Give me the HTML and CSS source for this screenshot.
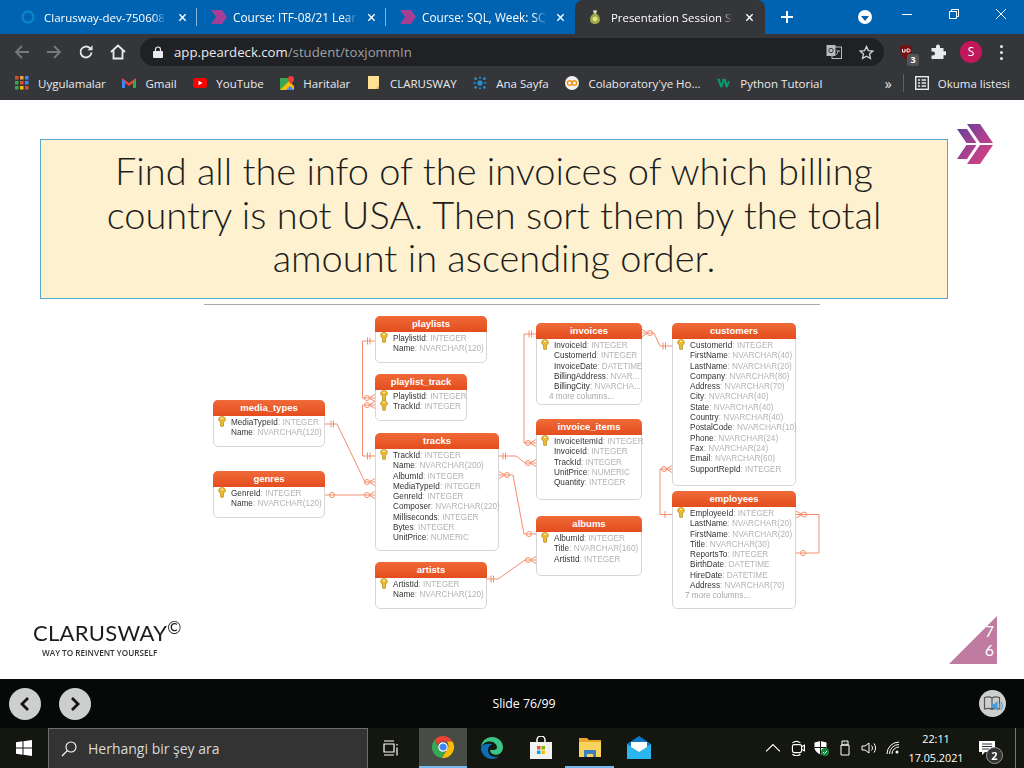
FILE: index.html
```html
<!DOCTYPE html>
<html lang="tr">
<head>
    <meta charset="UTF-8">
    <meta name="viewport" content="width=device-width, initial-scale=1.0">
    <title>Presentation Session Student</title>
    <link rel="stylesheet" href="styles.css">
</head>
<body>

<svg class="defs" width="0" height="0">
    <defs>
        <symbol id="key" viewBox="0 0 8 11">
            <path d="M4 .5C2 .5.6 1.700.6 3.400c0 1.200.8 2.200 1.900 2.700V10l1.500.8 1.500-.8V6.100c1.100-.5 1.900-1.500 1.900-2.700C7.400 1.700 6 .5 4 .5z" fill="#eab92d" stroke="#a8801a" stroke-width=".6"/>
            <rect x="2.800" y="1.800" width="2.400" height="1.200" rx=".5" fill="#fff4c0"/>
        </symbol>
        <symbol id="deck" viewBox="0 0 36 40">
            <defs>
                <linearGradient id="deck-fill" x1="0" y1="0" x2="1" y2="1">
                    <stop offset="0" stop-color="#5a3f9c"/>
                    <stop offset=".5" stop-color="#a8418f"/>
                    <stop offset="1" stop-color="#e0407e"/>
                </linearGradient>
            </defs>
            <path d="M0 5h10l9.500 14H9.500zM9.500 21h10L10 35H0zM10 0h13l13 19H23zM23 21h13L23 40H10z" fill="url(#deck-fill)"/>
        </symbol>
        <symbol id="deck-small" viewBox="0 0 16 14">
            <path d="M0 0h6l5 7-5 7H0l5-7zM6 0h5l5 7-5 7H6l5-7z" fill="#a43f96"/>
        </symbol>
    </defs>
</svg>

<header class="browser">
    <div class="tabs">
        <div class="tab tab-first">
            <svg class="tab-icon" viewBox="0 0 16 16"><circle cx="8" cy="8" r="5.500" fill="none" stroke="#0a84c6" stroke-width="2.400"/></svg>
            <span class="tab-title">Clarusway-dev-750608</span>
            <svg class="tab-close" viewBox="0 0 10 10"><path d="M1.500 1.500l7 7M8.500 1.500l-7 7"/></svg>
        </div>
        <div class="tab">
            <svg class="tab-icon"><use href="#deck-small"/></svg>
            <span class="tab-title">Course: ITF-08/21 Learn</span>
            <svg class="tab-close" viewBox="0 0 10 10"><path d="M1.500 1.500l7 7M8.500 1.500l-7 7"/></svg>
        </div>
        <div class="tab tab-before-active">
            <svg class="tab-icon"><use href="#deck-small"/></svg>
            <span class="tab-title">Course: SQL, Week: SQL</span>
            <svg class="tab-close" viewBox="0 0 10 10"><path d="M1.500 1.500l7 7M8.500 1.500l-7 7"/></svg>
        </div>
        <div class="tab tab-active">
            <svg class="tab-icon" viewBox="0 0 16 16"><path d="M6 1.500h4L9 4.500c2.500 1 4 3.500 4 6 0 3-2.300 4.500-5 4.500s-5-1.500-5-4.500c0-2.500 1.500-5 4-6z" fill="#9aa84a"/><path d="M6 1.500h4L9 4.500H7z" fill="#d8d8c8"/><circle cx="8" cy="10" r="2.400" fill="#e8e27a"/></svg>
            <span class="tab-title">Presentation Session Stu</span>
            <svg class="tab-close" viewBox="0 0 10 10"><path d="M1.500 1.500l7 7M8.500 1.500l-7 7"/></svg>
        </div>
        <svg class="new-tab" viewBox="0 0 12 12"><path d="M6 0v12M0 6h12"/></svg>
        <div class="tab-search"><span></span></div>
        <div class="window-controls">
            <svg viewBox="0 0 12 12"><path d="M1 6.500h10"/></svg>
            <svg viewBox="0 0 12 12"><path d="M1.500 3.500h7v7h-7zM3.500 3.500v-2h7v7h-2"/></svg>
            <svg viewBox="0 0 12 12"><path d="M1 1l10 10M11 1L1 11"/></svg>
        </div>
    </div>

    <div class="toolbar">
        <svg class="tool tool-off" viewBox="0 0 16 16"><path d="M15 8H2M8 2L2 8l6 6"/></svg>
        <svg class="tool tool-off" viewBox="0 0 16 16"><path d="M1 8h13M8 2l6 6-6 6"/></svg>
        <svg class="tool" viewBox="0 0 16 16"><path d="M13.500 8.500a5.500 5.500 0 1 1-1.600-4.400"/><path class="solid" d="M9.500 6.200h5v-5z"/></svg>
        <svg class="tool" viewBox="0 0 16 16"><path d="M1 8l7-6.500L15 8M3.500 6.500V14.500h9V6.500"/></svg>
        <div class="omnibox">
            <svg class="lock" viewBox="0 0 10 12"><path d="M2.500 5V3.500a2.500 2.500 0 0 1 5 0V5" fill="none" stroke="#e8eaed" stroke-width="1.200"/><rect y="5" width="10" height="7" rx="1" fill="#e8eaed"/></svg>
            <span class="url"><b>app.peardeck.com</b>/student/toxjommIn</span>
            <svg class="omni-icon" viewBox="0 0 16 16"><rect x="6" y="3" width="9.500" height="11.500" fill="none" stroke="#b9bbbe"/><rect x=".5" y="1" width="9" height="11" fill="#b9bbbe"/><circle cx="5" cy="6.500" r="2.200" fill="none" stroke="#35363a"/><path d="M10.500 7h3.500M12 7c0 2-1 3-2 4" fill="none" stroke="#b9bbbe"/></svg>
            <svg class="omni-star" viewBox="0 0 16 16"><path d="M8 1.500l2 4.400 4.800.5-3.600 3.200 1 4.700L8 11.900l-4.200 2.400 1-4.700L1.200 6.400 6 5.900z"/></svg>
        </div>
        <div class="ublock">
            <svg viewBox="0 0 16 16"><path d="M8 1l6 1.500c0 6-1.500 10-6 12.500C3.500 12.500 2 8.500 2 2.500z" fill="#7a0f12"/><path d="M4.500 5v3h2.500V5M9 5v3h1.500c1 0 1.500-.7 1.500-1.500S11.500 5 10.500 5z" fill="none" stroke="#fff" stroke-width="1"/></svg>
            <span class="ublock-badge">3</span>
        </div>
        <svg class="puzzle" viewBox="0 0 16 16"><path d="M6 2.500a2 2 0 0 1 4 0V4h3.500v3.200H15a2 2 0 0 1 0 4h-1.500V15H1.500v-3.500H3a2 2 0 0 0 0-4H1.500V4H6z" fill="#e8eaed"/></svg>
        <span class="avatar">S</span>
        <span class="kebab"><i></i><i></i><i></i></span>
    </div>

    <nav class="bookmarks">
        <div class="bookmark">
            <svg viewBox="0 0 14 14"><path fill="#dd4b39" d="M0 0h3.500v3.500H0z"/><path fill="#e8a33d" d="M5 0h3.500v3.500H5z"/><path fill="#4285f4" d="M10 0h3.500v3.500H10z"/><path fill="#34a853" d="M0 5h3.500v3.500H0z"/><path fill="#dd4b39" d="M5 5h3.500v3.500H5z"/><path fill="#4285f4" d="M10 5h3.500v3.500H10z"/><path fill="#34a853" d="M0 10h3.500v3.500H0z"/><path fill="#fbbc05" d="M5 10h3.500v3.500H5z"/><path fill="#dd4b39" d="M10 10h3.500v3.500H10z"/></svg>
            Uygulamalar
        </div>
        <div class="bookmark">
            <svg viewBox="0 0 14 14"><path fill="#ea4335" d="M0 2l7 5 7-5v3L7 10 0 5z"/><path fill="#4285f4" d="M0 3.500V12h3V5.500z"/><path fill="#34a853" d="M14 3.500V12h-3V5.500z"/></svg>
            Gmail
        </div>
        <div class="bookmark">
            <svg viewBox="0 0 14 14"><rect y="2" width="14" height="10" rx="2.500" fill="#f00"/><path d="M5.500 4.800L9.500 7l-4 2.200z" fill="#fff"/></svg>
            YouTube
        </div>
        <div class="bookmark">
            <svg viewBox="0 0 14 14"><path fill="#34a853" d="M0 2h9v12H0z"/><path fill="#fbbc05" d="M0 14L9 5l5 5v4z"/><path fill="#4285f4" d="M6 14l4-4 4 4z"/><path fill="#ea4335" d="M11 0a3 3 0 0 1 3 3c0 2-3 5-3 5S8 5 8 3a3 3 0 0 1 3-3z"/></svg>
            Haritalar
        </div>
        <div class="bookmark">
            <svg viewBox="0 0 12 14"><path d="M0 0h11v13H0z" fill="#fde293"/><path d="M11 9v4H8z" fill="#d8b64f"/></svg>
            CLARUSWAY
        </div>
        <div class="bookmark">
            <svg viewBox="0 0 16 16"><g fill="#2a8fd0"><circle cx="8" cy="8" r="3"/><circle cx="3" cy="3" r="1.500"/><circle cx="13" cy="3" r="1.500"/><circle cx="3" cy="13" r="1.500"/><circle cx="13" cy="13" r="1.500"/><circle cx="8" cy="2" r="1.200"/><circle cx="8" cy="14" r="1.200"/><circle cx="2" cy="8" r="1.200"/><circle cx="14" cy="8" r="1.200"/></g></svg>
            Ana Sayfa
        </div>
        <div class="bookmark">
            <svg viewBox="0 0 16 16"><circle cx="8" cy="8" r="8" fill="#f2f2f2"/><circle cx="5.300" cy="8" r="2.600" fill="none" stroke="#f09a1a" stroke-width="1.700"/><circle cx="10.700" cy="8" r="2.600" fill="none" stroke="#f09a1a" stroke-width="1.700"/></svg>
            Colaboratory'ye Ho...
        </div>
        <div class="bookmark">
            <svg viewBox="0 0 16 14"><path d="M0 2h3l2 6 1.500-6h2.500l-3 10H4zM7 2h3l1.500 6 1-3h2.500l-3 7h-2z" fill="#0c9a6b"/></svg>
            Python Tutorial
        </div>
        <div class="bookmark-end">
            <span class="more">»</span>
            <span class="bookmark-sep"></span>
            <div class="bookmark">
                <svg viewBox="0 0 14 14"><rect x=".7" y=".7" width="12.600" height="12.600" fill="none" stroke="#e8eaed" stroke-width="1.400"/><path d="M3 4h2M3 7h2M3 10h2M6.500 4H11M6.500 7H11M6.500 10H11" stroke="#e8eaed" stroke-width="1.300"/></svg>
                Okuma listesi
            </div>
        </div>
    </nav>
</header>

<main class="slide">
    <svg class="deck-logo"><use href="#deck"/></svg>

    <section class="question">
        <p>Find all the info of the invoices of which billing country is not USA. Then sort them by the total amount in ascending order.</p>
    </section>

    <div class="rule"></div>

    <div class="erd">
        <svg class="links" viewBox="0 0 1024 768">
            <path d="M375 341H362.500V398H375M375 405H362.500V456H375"/>
            <path d="M325 424H337L365 482H375"/>
            <path d="M325 495H375"/>
            <path d="M499 456H516L525 463H536"/>
            <path d="M499 475H513L524 534H536"/>
            <path d="M486 579H498L525 560H536"/>
            <path d="M536 334H524V443H536"/>
            <path d="M642 333H654L660 346H672"/>
            <path d="M672 469H660V514.500H672"/>
            <path d="M796 514.500H819V553H796"/>
            <!-- ticks -->
            <path d="M367.500 337.500v7M370 337.500v7M367.500 452.500v7M370 452.500v7M331 420.500v7M333.500 420.500v7M503 452.500v7M505.500 452.500v7M491 575.500v7M493.500 575.500v7M529 330.500v7M531.500 330.500v7M663 342.500v7M665.500 342.500v7M665 511v7"/>
            <!-- crow feet -->
            <path d="M375 394.500L369 398L375 401.500M375 401.500L369 405L375 408.500M375 478.500L369 482L375 485.500M375 491.500L369 495L375 498.500M536 459.500L530 463L536 466.500M536 439.500L530 443L536 446.500M536 556.500L530 560L536 563.500M642 329.500L648 333L642 336.500M499 471.500L505 475L499 478.500M672 465.500L666 469L672 472.500M796 511L802 514.500L796 518"/>
            <circle cx="367" cy="398" r="2.500"/><circle cx="367" cy="405" r="2.500"/><circle cx="367" cy="482" r="2.500"/><circle cx="367" cy="495" r="2.500"/>
            <circle cx="528" cy="463" r="2.500"/><circle cx="528" cy="443" r="2.500"/><circle cx="528" cy="560" r="2.500"/>
            <circle cx="650" cy="333" r="2.500"/><circle cx="507" cy="475" r="2.500"/><circle cx="664" cy="469" r="2.500"/>
            <circle cx="804" cy="514.500" r="2.500"/><circle cx="803" cy="553" r="2.500"/><circle cx="332" cy="495" r="2.500"/><circle cx="529" cy="534" r="2.500"/>
        </svg>

        <div class="entity e-playlists">
            <h4>playlists</h4>
            <ul>
                <li class="pk"><svg class="key"><use href="#key"/></svg>PlaylistId<em>: INTEGER</em></li>
                <li>Name<em>: NVARCHAR(120)</em></li>
            </ul>
        </div>
        <div class="entity e-playlist-track">
            <h4>playlist_track</h4>
            <ul>
                <li class="pk"><svg class="key"><use href="#key"/></svg>PlaylistId<em>: INTEGER</em></li>
                <li class="pk"><svg class="key"><use href="#key"/></svg>TrackId<em>: INTEGER</em></li>
            </ul>
        </div>
        <div class="entity e-media-types">
            <h4>media_types</h4>
            <ul>
                <li class="pk"><svg class="key"><use href="#key"/></svg>MediaTypeId<em>: INTEGER</em></li>
                <li>Name<em>: NVARCHAR(120)</em></li>
            </ul>
        </div>
        <div class="entity e-genres">
            <h4>genres</h4>
            <ul>
                <li class="pk"><svg class="key"><use href="#key"/></svg>GenreId<em>: INTEGER</em></li>
                <li>Name<em>: NVARCHAR(120)</em></li>
            </ul>
        </div>
        <div class="entity e-tracks">
            <h4>tracks</h4>
            <ul>
                <li class="pk"><svg class="key"><use href="#key"/></svg>TrackId<em>: INTEGER</em></li>
                <li>Name<em>: NVARCHAR(200)</em></li>
                <li>AlbumId<em>: INTEGER</em></li>
                <li>MediaTypeId<em>: INTEGER</em></li>
                <li>GenreId<em>: INTEGER</em></li>
                <li>Composer<em>: NVARCHAR(220)</em></li>
                <li>Milliseconds<em>: INTEGER</em></li>
                <li>Bytes<em>: INTEGER</em></li>
                <li>UnitPrice<em>: NUMERIC</em></li>
            </ul>
        </div>
        <div class="entity e-artists">
            <h4>artists</h4>
            <ul>
                <li class="pk"><svg class="key"><use href="#key"/></svg>ArtistId<em>: INTEGER</em></li>
                <li>Name<em>: NVARCHAR(120)</em></li>
            </ul>
        </div>
        <div class="entity e-invoices">
            <h4>invoices</h4>
            <ul>
                <li class="pk"><svg class="key"><use href="#key"/></svg>InvoiceId<em>: INTEGER</em></li>
                <li>CustomerId<em>: INTEGER</em></li>
                <li>InvoiceDate<em>: DATETIME</em></li>
                <li>BillingAddress<em>: NVAR...</em></li>
                <li>BillingCity<em>: NVARCHA...</em></li>
                <li class="more-cols">4 more columns...</li>
            </ul>
        </div>
        <div class="entity e-invoice-items">
            <h4>invoice_items</h4>
            <ul>
                <li class="pk"><svg class="key"><use href="#key"/></svg>InvoiceItemId<em>: INTEGER</em></li>
                <li>InvoiceId<em>: INTEGER</em></li>
                <li>TrackId<em>: INTEGER</em></li>
                <li>UnitPrice<em>: NUMERIC</em></li>
                <li>Quantity<em>: INTEGER</em></li>
            </ul>
        </div>
        <div class="entity e-albums">
            <h4>albums</h4>
            <ul>
                <li class="pk"><svg class="key"><use href="#key"/></svg>AlbumId<em>: INTEGER</em></li>
                <li>Title<em>: NVARCHAR(160)</em></li>
                <li>ArtistId<em>: INTEGER</em></li>
            </ul>
        </div>
        <div class="entity e-customers">
            <h4>customers</h4>
            <ul>
                <li class="pk"><svg class="key"><use href="#key"/></svg>CustomerId<em>: INTEGER</em></li>
                <li>FirstName<em>: NVARCHAR(40)</em></li>
                <li>LastName<em>: NVARCHAR(20)</em></li>
                <li>Company<em>: NVARCHAR(80)</em></li>
                <li>Address<em>: NVARCHAR(70)</em></li>
                <li>City<em>: NVARCHAR(40)</em></li>
                <li>State<em>: NVARCHAR(40)</em></li>
                <li>Country<em>: NVARCHAR(40)</em></li>
                <li>PostalCode<em>: NVARCHAR(10)</em></li>
                <li>Phone<em>: NVARCHAR(24)</em></li>
                <li>Fax<em>: NVARCHAR(24)</em></li>
                <li>Email<em>: NVARCHAR(60)</em></li>
                <li>SupportRepId<em>: INTEGER</em></li>
            </ul>
        </div>
        <div class="entity e-employees">
            <h4>employees</h4>
            <ul>
                <li class="pk"><svg class="key"><use href="#key"/></svg>EmployeeId<em>: INTEGER</em></li>
                <li>LastName<em>: NVARCHAR(20)</em></li>
                <li>FirstName<em>: NVARCHAR(20)</em></li>
                <li>Title<em>: NVARCHAR(30)</em></li>
                <li>ReportsTo<em>: INTEGER</em></li>
                <li>BirthDate<em>: DATETIME</em></li>
                <li>HireDate<em>: DATETIME</em></li>
                <li>Address<em>: NVARCHAR(70)</em></li>
                <li class="more-cols">7 more columns...</li>
            </ul>
        </div>
    </div>

    <div class="brand">
        <div class="brand-name">CLARUSWAY<sup>©</sup></div>
        <div class="brand-tag">WAY TO REINVENT YOURSELF</div>
    </div>

    <div class="page-corner"><span>7<br>6</span></div>
</main>

<div class="deck-bar">
    <button class="round">
        <svg viewBox="0 0 12 16"><path d="M9 2L3 8l6 6"/></svg>
    </button>
    <button class="round">
        <svg viewBox="0 0 12 16"><path d="M3 2l6 6-6 6"/></svg>
    </button>
    <span class="slide-count">Slide 76/99</span>
    <button class="round round-reader">
        <svg viewBox="0 0 20 18"><path class="book" d="M9 3C7 1.800 4 1.800 1.500 2.500v11.500C4 13.300 7 13.300 9 14.500c2-1.200 5-1.200 7.500-.5V2.500C14 1.800 11 1.800 9 3zM9 3v11.500"/><path class="speaker" d="M8.500 9h2.500l3.500-3v10l-3.500-3H8.500z"/><path class="wave" d="M16 8.500c1 1.500 1 3.500 0 5M18 7c1.600 2.200 1.600 5.800 0 8"/></svg>
    </button>
</div>

<footer class="taskbar">
    <div class="start">
        <svg viewBox="0 0 16 16"><path d="M0 2.300l6.500-1v6.300H0zM7.500 1.200L16 0v7.600H7.500zM0 8.500h6.500v6.300l-6.500-1zM7.500 8.500H16V16l-8.500-1.200z" fill="#fff"/></svg>
    </div>
    <div class="search">
        <svg viewBox="0 0 16 16"><circle cx="10" cy="6" r="5" fill="none" stroke="#fff" stroke-width="1.100"/><path d="M6.300 9.700L1 15" stroke="#fff" stroke-width="1.200"/></svg>
        <span>Herhangi bir şey ara</span>
    </div>
    <div class="task task-view">
        <svg viewBox="0 0 16 16"><path d="M1 1h10M1 15h10M1 4h10v8H1zM14 4v1.500M14 7.500v8" fill="none" stroke="#fff" stroke-width="1.200"/></svg>
    </div>
    <div class="task task-active">
        <svg viewBox="0 0 24 24">
            <path d="M12 1a11 11 0 0 1 9.500 5.500H12A5.500 5.500 0 0 0 6.800 10L3.500 5A11 11 0 0 1 12 1z" fill="#ea4335"/>
            <path d="M3.500 5l5 8.700A5.500 5.500 0 0 0 14 17l-3 6A11 11 0 0 1 3.500 5z" fill="#34a853"/>
            <path d="M21.500 6.500A11 11 0 0 1 11 23l5-8.500a5.500 5.500 0 0 0-.500-8z" fill="#fbbc05"/>
            <circle cx="12" cy="12" r="4.200" fill="#4285f4" stroke="#fff" stroke-width="1.200"/>
        </svg>
    </div>
    <div class="task">
        <svg viewBox="0 0 24 24">
            <path d="M12 1C5.500 1 1 6 1 12c1-4 4.500-6.500 8.500-6.500 4.500 0 7.500 3 7.500 6 0 1.500-1.500 2.500-3.500 2.500H10c0 4 5 5.500 8 4.500 3-1 5-4 5-7C23 5.500 18 1 12 1z" fill="#3ac486"/>
            <path d="M1 12c0 6 5 11 11 11 2.500 0 5-1 6.500-2.500-5 1.500-10.500-1-10.500-6.500 0-3 2-5 4.500-6-6-1-11 .5-11.500 4z" fill="#0c6fb8"/>
        </svg>
    </div>
    <div class="task">
        <svg viewBox="0 0 24 24"><path d="M8 6V4a4 4 0 0 1 8 0v2" fill="none" stroke="#fff" stroke-width="1.500"/><rect x="1" y="6" width="22" height="17" fill="#f1f1f1"/><path d="M8 10h3.500v3.500H8z" fill="#f25022"/><path d="M12.500 10H16v3.500h-3.500z" fill="#7fba00"/><path d="M8 14.500h3.500V18H8z" fill="#00a4ef"/><path d="M12.500 14.500H16V18h-3.500z" fill="#ffb900"/></svg>
    </div>
    <div class="task task-open">
        <svg viewBox="0 0 24 24"><path d="M1 3h8l2 2h12v17H1z" fill="#eaa628"/><path d="M1 7h22v15H1z" fill="#f8d45c"/><path d="M6 15h12v7h-3v-3H9v3H6z" fill="#3a7fc4"/></svg>
    </div>
    <div class="task">
        <svg viewBox="0 0 24 24"><path d="M0 8L12 0l12 8v15H0z" fill="#0f78c8"/><path d="M0 8l12 8 12-8v15H0z" fill="#2ab6ee"/><path d="M4 6h16v5l-8 5-8-5z" fill="#fff"/></svg>
    </div>

    <div class="tray">
        <svg viewBox="0 0 14 14"><path d="M1 10l6-6 6 6"/></svg>
        <svg viewBox="0 0 14 14"><rect x="3" y="4" width="8" height="7" rx="1.500"/><path d="M11 6l2.500-1.500v5L11 8M3 2.500c2-1.500 5-1.500 7 0M3 12.500c2 1.500 5 1.500 7 0"/></svg>
        <svg viewBox="0 0 16 16"><path class="fill" d="M7.500 1l6 1.500v5c0 3-2.500 5.500-6 7-3.500-1.500-6-4-6-7v-5z"/><path d="M7.500 1v13.500M1.500 7.500h12" stroke="#14170f"/><circle cx="12" cy="12" r="4" fill="#10893e" stroke="none"/><path d="M10 12l1.500 1.500L14 11" stroke="#fff"/></svg>
        <svg viewBox="0 0 14 16"><path d="M4 1h6v4H4zM3 5h8v10H3zM6 3h.5M8 3h.5"/></svg>
        <svg viewBox="0 0 16 16"><path d="M1 6h3l4-3v10l-4-3H1zM10.500 5.500c1.300 1.500 1.300 3.500 0 5M13 3.500c2 2.500 2 6.500 0 9"/></svg>
        <svg viewBox="0 0 16 16"><path d="M2 14A12 12 0 0 1 14 2M4.500 14A9.500 9.500 0 0 1 14 4.500M7 14A7 7 0 0 1 14 7"/><circle cx="12" cy="12" r="1.500" class="fill"/></svg>
    </div>
    <div class="clock">
        <span>22:11</span>
        <span>17.05.2021</span>
    </div>
    <div class="notify">
        <svg viewBox="0 0 16 16"><path d="M0 1h16v11H6l-3 3v-3H0z" fill="#fff"/><path d="M3 4h10M3 6.500h10M3 9h7" stroke="#333"/></svg>
        <span class="notify-badge">2</span>
    </div>
    <div class="show-desktop"></div>
</footer>

</body>
</html>
```
FILE: styles.css
```css
* {
    box-sizing: border-box;
}

body {
    margin: 0;
    width: 1024px;
    height: 768px;
    overflow: hidden;
    font-family: "Open Sans", "Liberation Sans", sans-serif;
    background-color: #fff;
}

.defs {
    position: absolute;
}

/* browser chrome */
.browser {
    height: 100px;
    background-color: #35363a;
    color: #e8eaed;
}

.tabs {
    display: flex;
    align-items: center;
    height: 34px;
    padding-left: 6px;
    background-color: #0063b1;
}

.tab {
    display: flex;
    align-items: center;
    gap: 6px;
    flex: none;
    width: 189px;
    height: 34px;
    padding: 0 10px 0 14px;
    font-size: 11.800px;
    color: #fff;
    background: linear-gradient(#8cb4d6, #8cb4d6) right 8px / 1px 18px no-repeat;
}

.tab-first {
    width: 191px;
    gap: 8px;
    font-size: 11.500px;
}

.tab-before-active {
    background: none;
}

.tab-active {
    width: 190px;
    gap: 8px;
    padding-left: 12px;
    padding-right: 11px;
    background: #35363a;
    border-radius: 8px 8px 0 0;
}

.tab-active .tab-title {
    font-size: 11.400px;
}

.tab-icon {
    flex: none;
    width: 16px;
    height: 16px;
}

.tab-title {
    flex: 1;
    overflow: hidden;
    white-space: nowrap;
    -webkit-mask-image: linear-gradient(90deg, #000 90%, transparent);
    mask-image: linear-gradient(90deg, #000 90%, transparent);
}

.tab-close {
    flex: none;
    width: 9px;
    height: 9px;
    margin-left: 4px;
    fill: none;
    stroke: #fff;
    stroke-width: 1.500;
}

.new-tab {
    flex: none;
    width: 12px;
    height: 12px;
    margin-left: 16px;
    fill: none;
    stroke: #fff;
    stroke-width: 2;
}

.tab-search {
    display: flex;
    align-items: center;
    justify-content: center;
    width: 14px;
    height: 14px;
    margin-left: 65px;
    background-color: #fff;
    border-radius: 50%;
}

.tab-search span {
    width: 0;
    height: 0;
    margin-top: 2px;
    border: 4px solid transparent;
    border-top: 5px solid #0063b1;
    border-bottom: 0;
}

.window-controls {
    display: flex;
    align-items: center;
    gap: 35px;
    margin-left: auto;
    padding-right: 17px;
    margin-bottom: 6px;
}

.window-controls svg {
    width: 12px;
    height: 12px;
    fill: none;
    stroke: #fff;
}

.toolbar {
    display: flex;
    align-items: center;
    height: 32px;
    padding: 4px 0 0 14px;
}

.tool {
    flex: none;
    width: 16px;
    height: 16px;
    margin-right: 16px;
    fill: none;
    stroke: #e8eaed;
    stroke-width: 1.800;
}

.tool .solid {
    fill: #e8eaed;
    stroke: none;
}

.tool-off {
    stroke: #77787b;
}

.omnibox {
    display: flex;
    align-items: center;
    flex: none;
    width: 744px;
    height: 28px;
    margin-left: -2px;
    padding: 0 10px 0 13px;
    background-color: #202124;
    border-radius: 14px;
}

.lock {
    width: 10px;
    height: 12px;
    margin-right: 11px;
}

.url {
    font-size: 13.200px;
    color: #9aa0a6;
    white-space: nowrap;
}

.url b {
    font-weight: 400;
    color: #e8eaed;
}

.omni-icon {
    width: 16px;
    height: 16px;
    margin-left: auto;
}

.omni-star {
    width: 15px;
    height: 15px;
    margin-left: 17px;
    fill: none;
    stroke: #d0d2d5;
    stroke-width: 1.400;
}

.ublock {
    position: relative;
    width: 16px;
    height: 16px;
    margin-left: 14px;
}

.ublock svg {
    display: block;
}

.ublock-badge {
    position: absolute;
    top: 10px;
    left: 9px;
    width: 12px;
    height: 12px;
    font-size: 9px;
    font-weight: 700;
    line-height: 12px;
    text-align: center;
    color: #fff;
    background-color: #555;
    border-radius: 2px;
}

.puzzle {
    width: 16px;
    height: 16px;
    margin-left: 16px;
}

.avatar {
    width: 22px;
    height: 22px;
    margin-left: 14px;
    font-size: 12px;
    line-height: 22px;
    text-align: center;
    color: #fff;
    background-color: #c2185b;
    border-radius: 50%;
}

.kebab {
    display: flex;
    flex-direction: column;
    gap: 3px;
    margin-left: 18px;
}

.kebab i {
    width: 3px;
    height: 3px;
    background-color: #e8eaed;
    border-radius: 50%;
}

.bookmarks {
    display: flex;
    align-items: center;
    gap: 16.700px;
    height: 34px;
    padding: 0 14px 0 15px;
    font-size: 11.500px;
}

.bookmark {
    display: flex;
    align-items: center;
    gap: 9px;
    white-space: nowrap;
}

.bookmark svg {
    flex: none;
    width: 14px;
    height: 14px;
}

.bookmark-end {
    display: flex;
    align-items: center;
    margin-left: auto;
}

.more {
    font-size: 14px;
}

.bookmark-sep {
    width: 1px;
    height: 18px;
    margin: 0 11px;
    background-color: #5f6063;
}

/* slide */
.slide {
    position: relative;
    height: 579px;
    background-color: #fff;
}

.deck-logo {
    position: absolute;
    top: 24px;
    left: 957px;
    width: 36px;
    height: 40px;
}

.question {
    position: absolute;
    top: 39px;
    left: 40px;
    width: 908px;
    height: 160px;
    padding: 9px 50px 0;
    background-color: #fdf1cf;
    border: 1px solid #5ba6c9;
}

.question p {
    margin: 0;
    font-family: "Lato", "Open Sans", sans-serif;
    font-size: 38px;
    font-weight: 300;
    line-height: 43.500px;
    text-align: center;
    color: #1d1d1d;
}

.rule {
    position: absolute;
    top: 204px;
    left: 204px;
    width: 616px;
    height: 1px;
    background-color: #a8a8a8;
}

.erd {
    position: absolute;
    top: -100px;
    left: 0;
    width: 1024px;
    height: 768px;
    filter: blur(0.3px);
}

.links {
    position: absolute;
    inset: 0;
    fill: none;
    stroke: #f58d6c;
    stroke-width: 1;
}

.entity {
    position: absolute;
    background-color: #fff;
    border: 1px solid #d6d6d6;
    border-radius: 5px;
    font-family: "Liberation Sans", sans-serif;
    font-size: 8.200px;
}

.entity h4 {
    height: 16px;
    margin: -1px -1px 0;
    font-size: 9.500px;
    font-weight: 700;
    line-height: 16px;
    text-align: center;
    color: #fff;
    background: linear-gradient(#f06a38, #e44d1e);
    border-radius: 5px 5px 0 0;
}

.entity ul {
    margin: 0;
    padding: 2px 0 0 17px;
    list-style: none;
}

.entity li {
    position: relative;
    height: 10.300px;
    line-height: 10.300px;
    white-space: nowrap;
    color: #333;
}

.entity em {
    font-style: normal;
    color: #b4b4b4;
}

.entity .more-cols {
    margin-left: -5px;
    color: #a8a8a8;
}

.key {
    position: absolute;
    top: -2px;
    left: -13px;
    width: 8px;
    height: 11px;
}

.e-playlists { left: 375px; top: 316px; width: 112px; height: 47px; }
.e-playlist-track { left: 375px; top: 374px; width: 92px; height: 47px; }
.e-media-types { left: 213px; top: 400px; width: 112px; height: 47px; }
.e-genres { left: 213px; top: 471px; width: 112px; height: 47px; }
.e-tracks { left: 375px; top: 433px; width: 124px; height: 118px; }
.e-artists { left: 375px; top: 562px; width: 112px; height: 47px; }
.e-invoices { left: 536px; top: 323px; width: 106px; height: 82px; }
.e-invoice-items { left: 536px; top: 419px; width: 106px; height: 81px; }
.e-albums { left: 536px; top: 516px; width: 106px; height: 60px; }
.e-customers { left: 672px; top: 323px; width: 124px; height: 163px; }
.e-employees { left: 672px; top: 491px; width: 124px; height: 118px; }

.brand {
    position: absolute;
    top: 521px;
    left: 33px;
    color: #1c1c1c;
}

.brand-name {
    font-family: "Lato", sans-serif;
    font-size: 22px;
    letter-spacing: 0.300px;
    line-height: 24px;
}

.brand-name sup {
    font-size: 17px;
    line-height: 0;
    vertical-align: 7px;
}

.brand-tag {
    margin: 3px 0 0 9px;
    font-size: 8.200px;
    font-weight: 600;
    line-height: 10px;
    color: #333;
}

.page-corner {
    position: absolute;
    top: 516px;
    left: 949px;
    width: 48px;
    height: 48px;
    background-color: #bf7ba0;
    clip-path: polygon(100% 0, 100% 100%, 0 100%);
}

.page-corner span {
    position: absolute;
    top: 5px;
    right: 3px;
    font-family: "Lato", sans-serif;
    font-size: 16px;
    line-height: 19px;
    text-align: center;
    color: #fff;
}

/* peardeck controls */
.deck-bar {
    position: relative;
    display: flex;
    align-items: center;
    gap: 18px;
    height: 49px;
    padding-left: 9px;
    background-color: #070909;
}

.round {
    display: flex;
    align-items: center;
    justify-content: center;
    width: 32px;
    height: 32px;
    padding: 0;
    background-color: #cdcfcd;
    border: none;
    border-radius: 50%;
}

.round svg {
    width: 12px;
    height: 16px;
    fill: none;
    stroke: #111;
    stroke-width: 2.800;
}

.slide-count {
    position: absolute;
    left: 24px;
    right: 0;
    text-align: center;
    font-size: 12.300px;
    color: #fff;
}

.round.round-reader {
    position: absolute;
    top: 11px;
    left: 979px;
    width: 27px;
    height: 27px;
}

.round-reader svg {
    width: 20px;
    height: 18px;
}

.round-reader .book {
    stroke: #555;
    stroke-width: 1.200;
}

.round-reader .speaker {
    fill: #4a9ad8;
    stroke: none;
}

.round-reader .wave {
    stroke: #4a9ad8;
    stroke-width: 1.200;
}

/* windows taskbar */
.taskbar {
    display: flex;
    height: 40px;
    background-color: #14170f;
    color: #fff;
}

.start {
    display: flex;
    align-items: center;
    justify-content: center;
    flex: none;
    width: 48px;
}

.start svg {
    width: 16px;
    height: 16px;
}

.search {
    display: flex;
    align-items: center;
    gap: 11px;
    flex: none;
    width: 320px;
    padding-left: 12px;
    background-color: #333;
    border: 1px solid #6e6e6e;
    border-bottom: 0;
    font-size: 14px;
    color: #d8d8d8;
}

.search svg {
    width: 16px;
    height: 16px;
}

.task {
    display: flex;
    align-items: center;
    justify-content: center;
    flex: none;
    width: 49px;
    height: 40px;
}

.task svg {
    width: 24px;
    height: 24px;
}

.task-view {
    width: 51px;
    padding-right: 5px;
}

.task-view svg {
    width: 16px;
    height: 16px;
}

.task-active {
    width: 48px;
    background-color: #474c45;
    border-bottom: 2px solid #76b9ed;
}

.task-open {
    border-bottom: 2px solid #76b9ed;
}

.tray {
    display: flex;
    align-items: center;
    gap: 8px;
    margin-left: 102px;
}

.tray svg {
    width: 16px;
    height: 16px;
    fill: none;
    stroke: #fff;
    stroke-width: 1;
}

.tray .fill {
    fill: #fff;
    stroke: none;
}

.clock {
    display: flex;
    flex-direction: column;
    align-items: center;
    flex: none;
    width: 60px;
    margin-left: 5px;
    font-size: 10.800px;
    line-height: 19px;
    padding-top: 1px;
}

.notify {
    position: relative;
    flex: none;
    width: 24px;
    margin-left: 13px;
}

.notify svg {
    position: absolute;
    top: 12px;
    left: 0;
    width: 16px;
    height: 16px;
}

.notify-badge {
    position: absolute;
    top: 19px;
    left: 7px;
    width: 17px;
    height: 17px;
    font-size: 11px;
    font-weight: 700;
    line-height: 15px;
    text-align: center;
    background-color: #333;
    border: 1px solid #999;
    border-radius: 50%;
}

.show-desktop {
    width: 1px;
    margin-left: 12px;
    background-color: #777;
}
```
